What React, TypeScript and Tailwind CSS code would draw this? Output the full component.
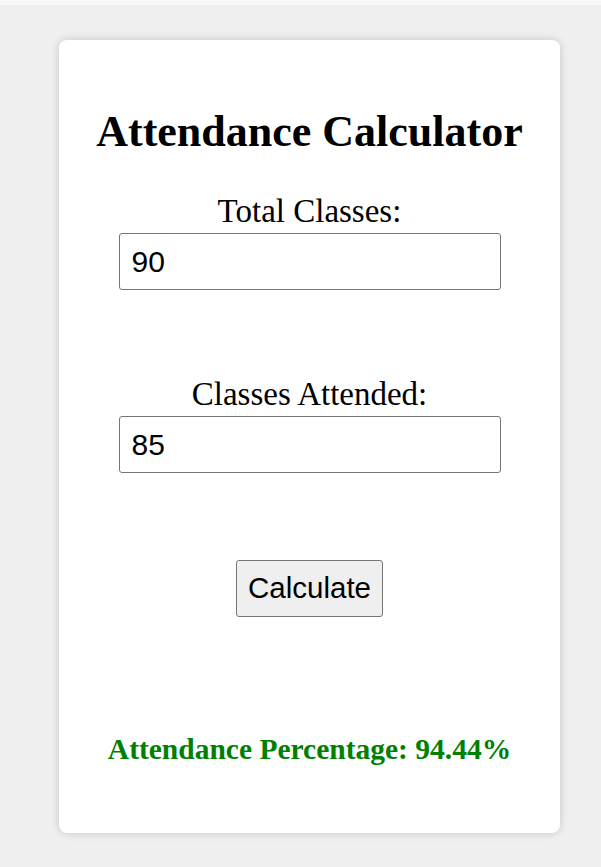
import { useState } from "react";

export default function App() {
  const [total, setTotal] = useState("90");
  const [attended, setAttended] = useState("85");
  const [result, setResult] = useState("94.44");

  const calculate = () => {
    const t = parseFloat(total);
    const a = parseFloat(attended);
    if (t > 0) setResult(((a / t) * 100).toFixed(2));
  };

  return (
    <div className="min-h-[867px] bg-[#f0f0f0] font-['Liberation_Serif',serif]">
      <div className="h-[5px] bg-[#f9f9f9]" />
      <div className="flex justify-center pl-[18px] pt-[35px]">
        <div className="flex h-[793px] w-[501px] flex-col items-center rounded-[8px] bg-white shadow-[0_0_10px_rgba(0,0,0,0.18)]">
          <h1 className="mt-[70px] text-[44px] font-bold leading-none text-black">
            Attendance Calculator
          </h1>

          <label className="mt-[41px] text-[33px] leading-none text-black">Total Classes:</label>
          <input
            value={total}
            onChange={(e) => setTotal(e.target.value)}
            className="mt-[5px] h-[57px] w-[382px] rounded-[3px] border border-[#767676] px-[12px] font-['Liberation_Sans',sans-serif] text-[30px] text-black outline-none"
          />

          <label className="mt-[88px] text-[33px] leading-none text-black">Classes Attended:</label>
          <input
            value={attended}
            onChange={(e) => setAttended(e.target.value)}
            className="mt-[5px] h-[57px] w-[382px] rounded-[3px] border border-[#767676] px-[12px] font-['Liberation_Sans',sans-serif] text-[30px] text-black outline-none"
          />

          <button
            onClick={calculate}
            className="mt-[87px] h-[57px] w-[147px] rounded-[3px] border border-[#767676] bg-[#efefef] font-['Liberation_Sans',sans-serif] text-[29.5px] text-black"
          >
            Calculate
          </button>

          <p className="mt-[118px] text-[29.5px] font-bold leading-none text-[#008000]">
            Attendance Percentage: {result}%
          </p>
        </div>
      </div>
    </div>
  );
}
